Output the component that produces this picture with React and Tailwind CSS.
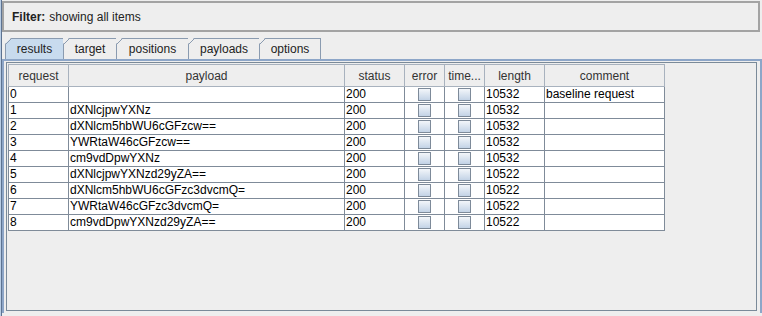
import React from 'react';

const cols = [
  { name: 'request', w: 'w-[60px]' },
  { name: 'payload', w: 'w-[276px]' },
  { name: 'status', w: 'w-[60px]' },
  { name: 'error', w: 'w-[40px]' },
  { name: 'time...', w: 'w-[40px]' },
  { name: 'length', w: 'w-[60px]' },
  { name: 'comment', w: 'w-[120px]' },
];

const rows = [
  ['0', '', '200', '10532', 'baseline request'],
  ['1', 'dXNlcjpwYXNz', '200', '10532', ''],
  ['2', 'dXNlcm5hbWU6cGFzcw==', '200', '10532', ''],
  ['3', 'YWRtaW46cGFzcw==', '200', '10532', ''],
  ['4', 'cm9vdDpwYXNz', '200', '10532', ''],
  ['5', 'dXNlcjpwYXNzd29yZA==', '200', '10522', ''],
  ['6', 'dXNlcm5hbWU6cGFzc3dvcmQ=', '200', '10522', ''],
  ['7', 'YWRtaW46cGFzc3dvcmQ=', '200', '10522', ''],
  ['8', 'cm9vdDpwYXNzd29yZA==', '200', '10522', ''],
];

const tabs = [
  { label: 'results', w: 'w-[59px]', active: true },
  { label: 'target', w: 'w-[53px]' },
  { label: 'positions', w: 'w-[72px]' },
  { label: 'payloads', w: 'w-[71px]' },
  { label: 'options', w: 'w-[61px]' },
];

function Checkbox() {
  return (
    <div className="h-[13px] w-[13px] border border-[#7d8a99] bg-gradient-to-b from-[#f3f6fa] to-[#c3d3e6]" />
  );
}

function Tab({ label, w, active }) {
  return (
    <div
      className={`relative flex h-[21px] items-center justify-center border-t border-r border-[#8a9bb0] text-[12px] text-[#222] ${w} ${
        active ? 'border-l bg-[#c8dbee]' : 'bg-[#eeeeee]'
      }`}
    >
      {/* slanted top-left corner */}
      <svg className="absolute -left-px -top-px" width="7" height="7" viewBox="0 0 7 7">
        <polygon points="0,0 6,0 0,6" fill="#eeeeee" />
        <line x1="0.5" y1="6.5" x2="6.5" y2="0.5" stroke="#8a9bb0" strokeWidth="1" />
      </svg>
      {label}
    </div>
  );
}

export default function App() {
  return (
    <div className="flex h-[316px] w-[762px] overflow-hidden bg-[#eeeeee] font-['Liberation_Sans',Arial,sans-serif]">
      {/* window edge */}
      <div className="w-[2px] shrink-0 border-l border-[#b9cde4] bg-[#5d7391]" />

      <div className="flex flex-1 flex-col">
        {/* Filter bar */}
        <div className="mt-px flex h-[31px] w-[758px] items-center border-2 border-[#a3a3a3] pl-[8px] text-[12px] text-[#222]">
          <span className="font-bold">Filter:</span>
          <span className="ml-[4px]">showing all items</span>
        </div>

        {/* Tabs */}
        <div className="mt-[6px] flex pl-[3px]">
          {tabs.map((t) => (
            <Tab key={t.label} {...t} />
          ))}
        </div>

        {/* Tab pane */}
        <div className="flex h-[254px] flex-col border-t-2 border-l-2 border-r-2 border-[#8da6c8] bg-[#eeeeee] pl-[2px] pt-[1px]">
          <div className="flex h-[249px] w-[751px] flex-col border border-[#7a8a99]">
            <div className="flex flex-col pl-px pt-px">
              {/* header */}
              <div className="flex h-[23px] w-[657px] border-l border-t border-[#a8b2be] bg-[#eeeeee]">
                {cols.map((c) => (
                  <div
                    key={c.name}
                    className={`flex items-center justify-center border-r border-b border-[#a8b2be] text-[12px] text-[#333] ${c.w}`}
                  >
                    {c.name}
                  </div>
                ))}
              </div>
              {/* body */}
              <div className="flex w-[657px] flex-col border-l border-[#7f8b99] bg-white">
                {rows.map((r) => (
                  <div key={r[0]} className="flex h-[16px] text-[12px] leading-[15px] text-black">
                    <div className="w-[60px] border-r border-b border-[#7f8b99] pl-px">{r[0]}</div>
                    <div className="w-[276px] border-r border-b border-[#7f8b99] pl-px">{r[1]}</div>
                    <div className="w-[60px] border-r border-b border-[#7f8b99] pl-px">{r[2]}</div>
                    <div className="flex w-[40px] items-center justify-center border-r border-b border-[#7f8b99]">
                      <Checkbox />
                    </div>
                    <div className="flex w-[40px] items-center justify-center border-r border-b border-[#7f8b99]">
                      <Checkbox />
                    </div>
                    <div className="w-[60px] border-r border-b border-[#7f8b99] pl-px">{r[3]}</div>
                    <div className="w-[120px] border-r border-b border-[#7f8b99] pl-px">{r[4]}</div>
                  </div>
                ))}
              </div>
            </div>
          </div>
        </div>
      </div>
    </div>
  );
}
